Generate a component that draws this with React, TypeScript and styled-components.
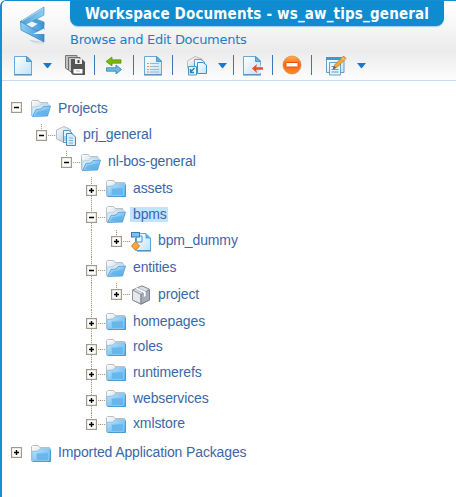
import React from "react";
import styled, { createGlobalStyle } from "styled-components";

const GlobalStyle = createGlobalStyle`
  * { box-sizing: border-box; }
  body { margin: 0; background: #fff; overflow: hidden; }
`;

const Panel = styled.main`
  width: 456px;
  height: 497px;
  border-left: 2px solid #148fd3;
  border-top: 1px solid #148fd3;
  border-top-left-radius: 6px;
  background: #fff;
  overflow: hidden;
`;

const Header = styled.header`
  height: 80px;
  border-bottom: 1px solid #c9dcee;
  background: linear-gradient(#ffffff 0, #f8f8f8 22px, #ebebeb 50px, #fdfdfd 79px);
`;

const Heading = styled.div`
  display: flex;
  height: 52px;
`;

const LogoBox = styled.div`
  width: 68px;
  padding: 5px 0 0 17px;
`;

const Title = styled.h1`
  margin: 0;
  width: 374px;
  height: 25px;
  padding-left: 15px;
  border-radius: 0 0 8px 8px;
  box-shadow: 0 1px 1px #9fcde8;
  background: #0f8bd0;
  color: #fff;
  font: bold 15px/26px "DejaVu Sans Condensed", "DejaVu Sans", sans-serif;
  font-stretch: condensed;
  letter-spacing: 0.17px;
  white-space: nowrap;
`;

const Subtitle = styled.p`
  margin: 5px 0 0;
  color: #1682c6;
  font: 13px/18px "DejaVu Sans", sans-serif;
  letter-spacing: -0.28px;
  white-space: nowrap;
`;

const Toolbar = styled.nav`
  display: flex;
  height: 24px;
  padding-left: 11px;
`;

const Tool = styled.button<{ $gap?: number }>`
  width: 22px;
  height: 24px;
  margin: 0 0 0 ${(p) => p.$gap ?? 0}px;
  padding: 0;
  border: 0;
  background: none;
  svg { display: block; }
`;

const Caret = styled.button<{ $gap: number }>`
  width: 9px;
  height: 24px;
  margin: 0 0 0 ${(p) => p.$gap}px;
  padding: 0;
  border: 0;
  background: none;
  svg { display: block; margin-top: 1px; }
`;

const Separator = styled.span<{ $gap: number }>`
  width: 1px;
  height: 20px;
  margin: 2px 0 0 ${(p) => p.$gap}px;
  background: #3f74b2;
`;

const Tree = styled.div`
  padding: 17px 0 0 9px;
  color: #3b67a8;
  font: 14px/16px "Liberation Sans", Arial, sans-serif;
  letter-spacing: -0.13px;
`;

const TreeRow = styled.div<{ $height: number; $indent: number }>`
  display: flex;
  height: ${(p) => p.$height}px;
  padding-left: ${(p) => p.$indent}px;
`;

const Gutter = styled.div`
  display: flex;
  flex-direction: column;
  align-items: center;
  width: 11px;
`;

const Parent = styled(Gutter)`
  margin-right: 14px;
`;

const VLine = styled.i<{ $height?: number; $hidden?: boolean }>`
  width: 1px;
  ${(p) => (p.$height === undefined ? "flex: 1;" : `flex: none; height: ${p.$height}px;`)}
  background: repeating-linear-gradient(#a39d8c 0 1px, #efede8 1px 2px);
  visibility: ${(p) => (p.$hidden ? "hidden" : "visible")};
`;

const HLine = styled.i<{ $top: number; $hidden: boolean }>`
  width: 8px;
  height: 1px;
  margin: ${(p) => p.$top}px 0 0 1px;
  background: repeating-linear-gradient(90deg, #a39d8c 0 1px, #efede8 1px 2px);
  visibility: ${(p) => (p.$hidden ? "hidden" : "visible")};
`;

const Toggle = styled.button`
  flex: none;
  width: 11px;
  height: 11px;
  padding: 0;
  border: 0;
  background: none;
  svg { display: block; }
`;

const IconCell = styled.span<{ $top: number }>`
  width: 22px;
  height: 22px;
  margin: ${(p) => p.$top}px 0 0 0;
  svg { display: block; }
`;

const Label = styled.span<{ $top: number; $selected?: boolean }>`
  height: 15px;
  line-height: 15px;
  margin: ${(p) => p.$top}px 0 0 2px;
  padding: 0 1px 0 3px;
  white-space: nowrap;
  background: ${(p) => (p.$selected ? "#bfe4ff" : "transparent")};
`;

const GradientSheet = styled.svg`
  display: block;
  width: 0;
  height: 0;
`;

const Gradients = () => (
  <GradientSheet>
    <defs>
      <linearGradient id="paper" x1="0" y1="0" x2="1" y2="1">
        <stop offset="0" stopColor="#fff" />
        <stop offset="1" stopColor="#bfe2f8" />
      </linearGradient>
      <linearGradient id="blue" x1="0" y1="0" x2="1" y2="1">
        <stop offset="0" stopColor="#c5e8fc" />
        <stop offset="1" stopColor="#4fa9e6" />
      </linearGradient>
      <linearGradient id="grey" x1="0" y1="0" x2="1" y2="1">
        <stop offset="0" stopColor="#fff" />
        <stop offset="1" stopColor="#b9c0ca" />
      </linearGradient>
      <linearGradient id="orange" x1="0" y1="0" x2="0" y2="1">
        <stop offset="0" stopColor="#ffb03e" />
        <stop offset=".5" stopColor="#f36b1c" />
        <stop offset="1" stopColor="#f78a2a" />
      </linearGradient>
      <linearGradient id="bandTop" x1="0" y1="0" x2="1" y2="0">
        <stop offset="0" stopColor="#4f9fd4" />
        <stop offset="1" stopColor="#8fcdf0" />
      </linearGradient>
      <linearGradient id="bandLow" x1="0" y1="0" x2="1" y2="0">
        <stop offset="0" stopColor="#8ed0f5" />
        <stop offset="1" stopColor="#3a8fce" />
      </linearGradient>
      <linearGradient id="fade" x1="0" y1="0" x2="0" y2="1">
        <stop offset="0" stopColor="#8ab6d3" stopOpacity=".7" />
        <stop offset="1" stopColor="#a9cce2" stopOpacity="0" />
      </linearGradient>
    </defs>
  </GradientSheet>
);

const Logo = () => (
  <svg width="28" height="42" viewBox="0 0 28 42">
    <path d="M10 34 L25 36 V39 L18 39Z" fill="url(#fade)" />
    <path d="M2 15 L13 11.5 L25 16 V19 L13 16 L4 21Z" fill="#4b9fd8" stroke="#3a8cc6" strokeWidth=".6" />
    <path d="M25 1 V9 L13 15.5 L5 20 L1.5 15.5Z" fill="url(#bandTop)" stroke="#4598d0" strokeWidth=".7" />
    <path d="M7 18.5 L13 15.5 L19 18.5 L13 22Z" fill="#e9f6fd" />
    <path d="M19 18 L25 16.5 V24 L14 29 L6 25 L13 22Z" fill="url(#bandLow)" stroke="#3a8fce" strokeWidth=".6" />
    <path d="M1.5 15.5 L13 22 L25 28 V36 L2 24Z" fill="url(#bandLow)" stroke="#367fb7" strokeWidth=".7" />
    <path d="M14 28 L25 22.5 V28Z" fill="#f2f5f7" />
    <path d="M3 15 L24 2.5" stroke="#b8e0f7" strokeWidth=".8" />
  </svg>
);

const pageShape = "M1.5 3.5 H14 L18.5 8 V21.5 H1.5Z";

const NewDocument = ({ children }: { children?: React.ReactNode }) => (
  <svg width="22" height="24" viewBox="0 0 22 24">
    <path d={pageShape} fill="url(#paper)" stroke="#6da8d4" />
    <path d="M13.5 3.5 V8.5 H18.5Z" fill="#64b2e6" stroke="#4a98ce" />
    <path d="M1 22 H19" stroke="#4b83ad" />
    {children}
  </svg>
);

const ListDocument = () => (
  <NewDocument>
    <path d="M7 10.5h9M7 13.5h9M7 16.5h9M7 19h9" stroke="#9db6ca" />
    <path d="M4 10.5h2M4 13.5h2M4 16.5h2M4 19h2" stroke="#f18b61" />
  </NewDocument>
);

const ImportDocument = () => (
  <NewDocument>
    <path d="M19 11 H22 V20 H17Z" fill="#f4f5f6" />
    <path d="M21 15.5 H13" stroke="#ee4d20" strokeWidth="2.5" />
    <path d="M10 15.5 L15 11 L14 15.5 L15 20Z" fill="#ee4d20" />
  </NewDocument>
);

const SaveAll = () => (
  <svg width="22" height="24" viewBox="0 0 22 24">
    <path d="M1.5 2.5H13V16.5H3L1.5 15Z" fill="#c2c2c2" stroke="#777" />
    <path d="M4.5 4.5H16V18.5H6L4.5 17Z" fill="#c8c8c8" stroke="#6c6c6c" />
    <path d="M7 6H18L21 9V22H9L7 20Z" fill="#555" />
    <path d="M11 6H18V11H11Z" fill="#eee" />
    <path d="M14.5 7V10" stroke="#454545" strokeWidth="2" />
    <path d="M9.5 16H18.5V20.5H9.5Z" fill="#fff" />
    <path d="M12 18h4" stroke="#bbb" />
  </svg>
);

const Synchronize = () => (
  <svg width="22" height="24" viewBox="0 0 22 24">
    <path d="M3 8.5 L9 4 V6.8 H18 V10.2 H9 V13Z" fill="#79b900" stroke="#568e09" strokeWidth=".7" />
    <path d="M18.5 16.5 L13 12 V14.8 H3.5 V18.2 H13 V21Z" fill="#64bce7" stroke="#27739a" strokeWidth=".7" />
  </svg>
);

const Shortcut = () => (
  <svg width="22" height="24" viewBox="0 0 22 24">
    <path d="M1.5 8 L9 3.5 L16 6V18H5L1.5 15Z" fill="url(#grey)" stroke="#bcbfc3" />
    <path d="M8.5 6.5H15L18.5 9V19H8.5Z" fill="url(#paper)" stroke="#5ba2d2" />
    <path d="M11.5 9.5H17L20.5 12V20.5H11.5Z" fill="url(#paper)" stroke="#3a92cc" />
    <path d="M2.5 13.5H10.5V22H2.5Z" fill="#e7f5fd" stroke="#4a97c6" />
    <path d="M8.5 15 L4.5 19 M4.5 16V19.5H8" stroke="#2987bd" strokeWidth="1.5" fill="none" />
  </svg>
);

const Remove = () => (
  <svg width="22" height="24" viewBox="0 0 22 24">
    <circle cx="11" cy="12" r="9" fill="url(#orange)" stroke="#eb7c32" strokeWidth=".7" />
    <rect x="5" y="9.5" width="12" height="4.5" rx=".6" fill="#fff" stroke="#ec4c11" />
  </svg>
);

const EditForm = () => (
  <svg width="22" height="24" viewBox="0 0 22 24">
    <path d="M1.5 4.5H19V19.5H1.5Z" fill="url(#paper)" stroke="#689cbd" />
    <path d="M1 4H19.5V7H1Z" fill="#4297d0" />
    <path d="M4.5 9.5H15.5V22H4.5Z" fill="#e5f4fc" stroke="#5ea6d1" />
    <path d="M6.5 13.5h5M6.5 16.5h7M6.5 19h7" stroke="#6498bc" />
    <path d="M8.5 15.5 L10 11.5 L18.5 3 L21 5.5 L12.5 14Z" fill="#f5a831" stroke="#b97b28" strokeWidth=".8" />
    <path d="M17 4.5L19.5 7" stroke="#e8e1ce" />
    <path d="M8 16 L9 13 L11 15Z" fill="#5a4c38" />
  </svg>
);

const DownArrow = () => (
  <svg width="9" height="17" viewBox="0 0 9 17">
    <path d="M0 6 H9 L5 11 H4Z" fill="#1779c7" />
  </svg>
);

const ClosedFolder = () => (
  <svg width="20" height="18" viewBox="0 0 20 18">
    <path d="M.5 15.5V1.5L1.5.5H7.5L9 2.5H18.5V15.5Z" fill="url(#grey)" stroke="#b6c1cb" />
    <path d="M1 16V6.5L7 6L9 3.8H19.5V16.5H1Z" fill="url(#blue)" stroke="#80bde2" strokeWidth=".8" />
    <path d="M5.5 15.5V8.5L17.5 7.5V15.5Z" fill="#69b6ed" stroke="#94cdf2" strokeWidth=".7" />
    <path d="M2 16.5H19.5V5" fill="none" stroke="#3c91cb" strokeWidth=".8" />
  </svg>
);

const OpenFolder = () => (
  <svg width="20" height="18" viewBox="0 0 20 18">
    <path d="M.5 15.5V1.5L1.5.5H7.5L9 2.5H16.5V15.5Z" fill="url(#grey)" stroke="#b6c1cb" />
    <path d="M1 7L8 6.5L10 4H18V11L3 16H1Z" fill="#d3e9f8" stroke="#a9cce4" strokeWidth=".7" />
    <path d="M1.5 16.5L5 9.5L10 9L12 6.5L19.5 6L16.5 16Z" fill="url(#blue)" stroke="#4c9bd3" strokeWidth=".8" />
    <path d="M4 15L6.5 11.5L17 9.5L15.5 15Z" fill="#5db0ea" opacity=".75" />
  </svg>
);

const ProjectIcon = () => (
  <svg width="20" height="20" viewBox="0 0 20 20">
    <path d="M.5 4L8 .5L14.5 3.5V14L8 16.5L.5 13Z" fill="url(#grey)" stroke="#b2bcc8" />
    <path d="M7.5 4.5H13L16 7V16.5H7.5Z" fill="#e7f5fd" stroke="#539ac9" />
    <path d="M10.5 7.5H16L19.5 11V19.5H10.5Z" fill="#d4edfc" stroke="#3a8fc9" />
    <path d="M9 10v5M13 12h4M13 14.5h4M13 17h4" stroke="#77aed2" />
  </svg>
);

const ProcessIcon = () => (
  <svg width="20" height="20" viewBox="0 0 20 20">
    <path d="M5.5 1.5H15L19.5 6V18.5H5.5Z" fill="url(#paper)" stroke="#5ba7dc" />
    <path d="M14.5 1.5V6.5H19.5Z" fill="#53aae4" />
    <path d="M4.5 6V13M8 4H11V10H6" fill="none" stroke="#5192bd" />
    <rect x=".5" y=".5" width="8" height="4.5" fill="#78c3f0" stroke="#337faf" />
    <path d="M4.5 9.5L8.5 14L4.5 18.5L.5 14Z" fill="#f7a83e" stroke="#dc7c22" />
    <path d="M6 19H20" stroke="#3d80b0" />
  </svg>
);

const CubeIcon = () => (
  <svg width="20" height="20" viewBox="0 0 20 20">
    <path d="M1.5 5L11 .8L18.5 4.3V15L10 19.2L1.5 15Z" fill="#d9dde4" stroke="#7d8591" />
    <path d="M1.5 5L10 9.5V19L1.5 15Z" fill="#e4e8ef" stroke="#8a929d" />
    <path d="M10 9.5L18.5 4.5V15L10 19Z" fill="#a6acb8" stroke="#7b8491" />
    <path d="M4 3.9L12.5 8V12.5L15 11V6.6L6.5 2.8" fill="#fff" stroke="#9ba3af" strokeWidth=".6" />
  </svg>
);

const ToggleIcon = ({ open }: { open: boolean }) => (
  <svg width="11" height="11" viewBox="0 0 11 11">
    <rect x=".6" y=".6" width="9.8" height="9.8" fill="#fff" stroke="#a39b89" strokeWidth="1.2" />
    <path d="M3 5.5H8" stroke="#000" strokeWidth="1.4" />
    {!open && <path d="M5.5 3V8" stroke="#000" strokeWidth="1.4" />}
  </svg>
);

const icons = {
  closed: ClosedFolder,
  open: OpenFolder,
  project: ProjectIcon,
  process: ProcessIcon,
  cube: CubeIcon,
};

type Node = {
  label: string;
  icon: keyof typeof icons;
  depth: number;
  height: number;
  toggleTop: number;
  iconTop: number;
  labelTop: number;
  open?: boolean;
  continues?: boolean;
  selected?: boolean;
};

const nodes: Node[] = [
  { label: "Projects", icon: "open", depth: 0, height: 26, toggleTop: 4, iconTop: 2, labelTop: 3, open: true },
  { label: "prj_general", icon: "project", depth: 1, height: 27, toggleTop: 6, iconTop: 2, labelTop: 3, open: true },
  { label: "nl-bos-general", icon: "open", depth: 2, height: 26, toggleTop: 6, iconTop: 3, labelTop: 3, open: true },
  { label: "assets", icon: "closed", depth: 3, height: 27, toggleTop: 8, iconTop: 3, labelTop: 4, continues: true },
  { label: "bpms", icon: "open", depth: 3, height: 26, toggleTop: 8, iconTop: 2, labelTop: 3, open: true, continues: true, selected: true },
  { label: "bpm_dummy", icon: "process", depth: 4, height: 27, toggleTop: 6, iconTop: 2, labelTop: 3 },
  { label: "entities", icon: "open", depth: 3, height: 26, toggleTop: 8, iconTop: 3, labelTop: 3, open: true, continues: true },
  { label: "project", icon: "cube", depth: 4, height: 27, toggleTop: 6, iconTop: 2, labelTop: 4 },
  { label: "homepages", icon: "closed", depth: 3, height: 26, toggleTop: 8, iconTop: 3, labelTop: 4, continues: true },
  { label: "roles", icon: "closed", depth: 3, height: 26, toggleTop: 8, iconTop: 3, labelTop: 3, continues: true },
  { label: "runtimerefs", icon: "closed", depth: 3, height: 26, toggleTop: 7, iconTop: 2, labelTop: 3, continues: true },
  { label: "webservices", icon: "closed", depth: 3, height: 25, toggleTop: 7, iconTop: 2, labelTop: 3, continues: true },
  { label: "xmlstore", icon: "closed", depth: 3, height: 28, toggleTop: 6, iconTop: 3, labelTop: 3 },
  { label: "Imported Application Packages", icon: "closed", depth: 0, height: 26, toggleTop: 6, iconTop: 4, labelTop: 4 },
];

const TreeNode = ({ node }: { node: Node }) => {
  const Icon = icons[node.icon];
  const nested = node.depth === 4;
  return (
    <TreeRow $height={node.height} $indent={(nested ? 3 : node.depth) * 25}>
      {nested && (
        <Parent>
          <VLine />
        </Parent>
      )}
      <Gutter>
        <VLine $height={node.toggleTop} $hidden={node.depth === 0} />
        <Toggle aria-label={node.open ? "Collapse" : "Expand"}>
          <ToggleIcon open={!!node.open} />
        </Toggle>
        {node.continues && <VLine />}
      </Gutter>
      <HLine $top={node.toggleTop + 5} $hidden={node.depth === 0} />
      <IconCell $top={node.iconTop}>
        <Icon />
      </IconCell>
      <Label $top={node.labelTop} $selected={node.selected}>
        {node.label}
      </Label>
    </TreeRow>
  );
};

export default function App() {
  return (
    <Panel>
      <GlobalStyle />
      <Gradients />
      <Header>
        <Heading>
          <LogoBox>
            <Logo />
          </LogoBox>
          <div>
            <Title>Workspace Documents - ws_aw_tips_general</Title>
            <Subtitle>Browse and Edit Documents</Subtitle>
          </div>
        </Heading>
        <Toolbar>
          <Tool aria-label="New"><NewDocument /></Tool>
          <Caret $gap={8} aria-label="New options"><DownArrow /></Caret>
          <Tool $gap={12} aria-label="Save all"><SaveAll /></Tool>
          <Separator $gap={8} />
          <Tool $gap={8} aria-label="Synchronize"><Synchronize /></Tool>
          <Separator $gap={8} />
          <Tool $gap={9} aria-label="Properties"><ListDocument /></Tool>
          <Separator $gap={7} />
          <Tool $gap={13} aria-label="Shortcut"><Shortcut /></Tool>
          <Caret $gap={10} aria-label="Shortcut options"><DownArrow /></Caret>
          <Separator $gap={6} />
          <Tool $gap={8} aria-label="Import"><ImportDocument /></Tool>
          <Separator $gap={8} />
          <Tool $gap={8} aria-label="Remove"><Remove /></Tool>
          <Separator $gap={8} />
          <Tool $gap={13} aria-label="Edit"><EditForm /></Tool>
          <Caret $gap={10} aria-label="Edit options"><DownArrow /></Caret>
        </Toolbar>
      </Header>
      <Tree>
        {nodes.map((node) => (
          <TreeNode key={node.label} node={node} />
        ))}
      </Tree>
    </Panel>
  );
}
